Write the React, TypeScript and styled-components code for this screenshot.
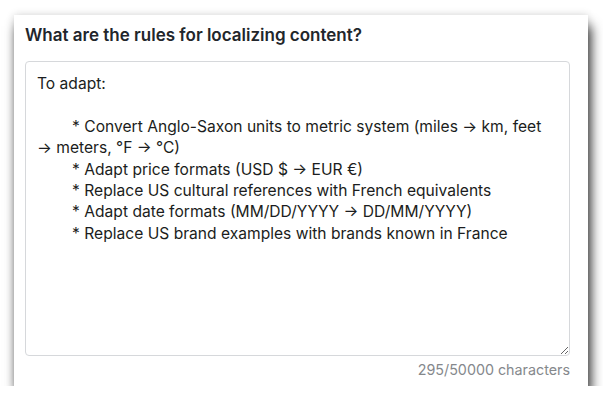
import React from 'react';
import styled, { createGlobalStyle } from 'styled-components';

const GlobalStyle = createGlobalStyle`
    html, body {
        margin: 0;
        background: #ffffff;
    }
    body {
        padding: 15px 15px 0 14px;
        font-family: Inter, 'Noto Sans', sans-serif;
    }
`;

const initial = `To adapt:

        * Convert Anglo-Saxon units to metric system (miles → km, feet → meters, °F → °C)
        * Adapt price formats (USD $ → EUR €)
        * Replace US cultural references with French equivalents
        * Adapt date formats (MM/DD/YYYY → DD/MM/YYYY)
        * Replace US brand examples with brands known in France`;

export default function App() {
    const [text, setText] = React.useState(initial);

    return (
        <>
            <GlobalStyle />
            <Card>
                <Question>What are the rules for localizing content?</Question>
                <Answer value={text} onChange={(e) => setText(e.currentTarget.value)} />
                <Counter>{295}/50000 characters</Counter>
            </Card>
        </>
    );
}

const Card = styled.div`
    width: 574px;
    height: 371px;
    box-sizing: border-box;
    background: #ffffff;
    padding: 10px 18px 0 11px;
    display: flex;
    flex-direction: column;
    box-shadow: 3px 11px 11px rgba(0, 0, 0, 0.78), 0 0 8px rgba(0, 0, 0, 0.16);
`;

const Question = styled.h2`
    margin: 0 0 15px;
    font-size: 17px;
    line-height: 21px;
    font-weight: 600;
    color: #22262b;
`;

const Answer = styled.textarea`
    height: 295px;
    box-sizing: border-box;
    border: 1px solid #d6d8db;
    border-radius: 4px;
    padding: 11px 20px 11px 11px;
    font-family: Inter, 'Noto Sans', sans-serif;
    font-size: 15.6px;
    line-height: 21.4px;
    color: #1b1d20;
    resize: vertical;
    outline: none;
    white-space: pre-wrap;
`;

const Counter = styled.div`
    margin-top: 5px;
    text-align: right;
    font-size: 14.3px;
    line-height: 18px;
    color: #85888c;
`;
